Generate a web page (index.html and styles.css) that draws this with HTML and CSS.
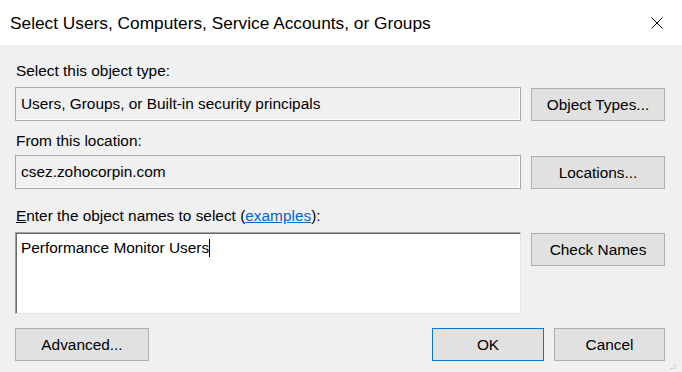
FILE: index.html
```html
<!DOCTYPE html>
<html lang="en">
<head>
  <meta charset="UTF-8" />
  <meta name="viewport" content="width=device-width, initial-scale=1.0" />
  <title>Select Users, Computers, Service Accounts, or Groups</title>
  <link rel="stylesheet" href="styles.css">
</head>
<body>
  <div class="dialog">
    <div class="title-bar">
      <span class="title">Select Users, Computers, Service Accounts, or Groups</span>
      <svg class="close" width="12" height="12" viewBox="0 0 12 12">
        <path d="M0.5 0.5 L11.5 11.5 M11.5 0.5 L0.5 11.5" stroke="#000" stroke-width="1" fill="none" />
      </svg>
    </div>

    <div class="dialog-body">
      <div class="label label-first">Select this object type:</div>
      <div class="row">
        <div class="field">Users, Groups, or Built-in security principals</div>
        <button class="btn">Object Types...</button>
      </div>

      <div class="label label-second">From this location:</div>
      <div class="row">
        <div class="field">csez.zohocorpin.com</div>
        <button class="btn">Locations...</button>
      </div>

      <div class="label label-third"><u>E</u>nter the object names to select (<a href="#" class="link">examples</a>):</div>
      <div class="row">
        <div class="names">Performance Monitor Users<span class="caret"></span></div>
        <button class="btn">Check Names</button>
      </div>

      <div class="footer">
        <button class="btn">Advanced...</button>
        <div class="footer-right">
          <button class="btn btn-default">OK</button>
          <button class="btn btn-cancel">Cancel</button>
        </div>
      </div>
    </div>

    <svg class="grip" width="6" height="6" viewBox="0 0 6 6">
      <rect x="4" y="0" width="1" height="1" fill="#bcbcbc" />
      <rect x="2" y="2" width="1" height="1" fill="#bcbcbc" />
      <rect x="4" y="2" width="1" height="1" fill="#bcbcbc" />
      <rect x="0" y="4" width="1" height="1" fill="#bcbcbc" />
      <rect x="2" y="4" width="1" height="1" fill="#bcbcbc" />
      <rect x="4" y="4" width="1" height="1" fill="#bcbcbc" />
    </svg>
  </div>
</body>
</html>
```

FILE: styles.css
```css
body {
  margin: 0;
  font-family: "Liberation Sans", Arial, sans-serif;
  font-size: 15.4px;
  color: #000;
  background-color: #f0f0f0;
}
.dialog {
  position: relative;
  width: 682px;
  height: 372px;
  background-color: #f0f0f0;
}
.title-bar {
  height: 45px;
  background-color: #fff;
  display: flex;
  align-items: center;
  justify-content: space-between;
  padding: 0 19px 0 10px;
  box-sizing: border-box;
}
.title {
  font-size: 17.3px;
  padding-top: 1px;
}
.close {
  display: block;
}
.dialog-body {
  padding: 0 17px 0 15px;
  display: flex;
  flex-direction: column;
}
.label {
  line-height: 16px;
  padding-left: 1px;
}
.label-first {
  margin-top: 18px;
  margin-bottom: 8px;
}
.label-second {
  margin-top: 12px;
  margin-bottom: 6px;
}
.label-third {
  margin-top: 19px;
  margin-bottom: 8px;
}
.link {
  color: #0066cc;
}
.row {
  display: flex;
  align-items: flex-start;
  gap: 10px;
}
.field {
  width: 506px;
  height: 34px;
  box-sizing: border-box;
  border: 1px solid #a9a9a9;
  box-shadow: inset -1px -1px 0 #fff;
  padding-left: 5px;
  display: flex;
  align-items: center;
}
.names {
  width: 506px;
  height: 82px;
  box-sizing: border-box;
  background-color: #fff;
  border: 1px solid;
  border-color: #a0a0a0 #e3e3e3 #e3e3e3 #a0a0a0;
  box-shadow: inset 1px 1px 0 #696969;
  padding: 6px 5px;
  line-height: 17px;
}
.caret {
  display: inline-block;
  width: 1px;
  height: 18px;
  background-color: #000;
  vertical-align: -4px;
}
.btn {
  width: 134px;
  height: 33px;
  margin-top: 1px;
  box-sizing: border-box;
  border: 1px solid #adadad;
  background-color: #e1e1e1;
  font-family: "Liberation Sans", Arial, sans-serif;
  font-size: 15.4px;
  color: #000;
  padding: 0;
}
.footer {
  display: flex;
  justify-content: space-between;
  margin-top: 14px;
}
.footer .btn {
  margin-top: 0;
}
.footer-right {
  display: flex;
  gap: 10px;
}
.btn-default {
  width: 112px;
  border-color: #0078d7;
}
.btn-cancel {
  width: 111px;
}
.grip {
  position: absolute;
  right: 5px;
  bottom: 2px;
}
```
